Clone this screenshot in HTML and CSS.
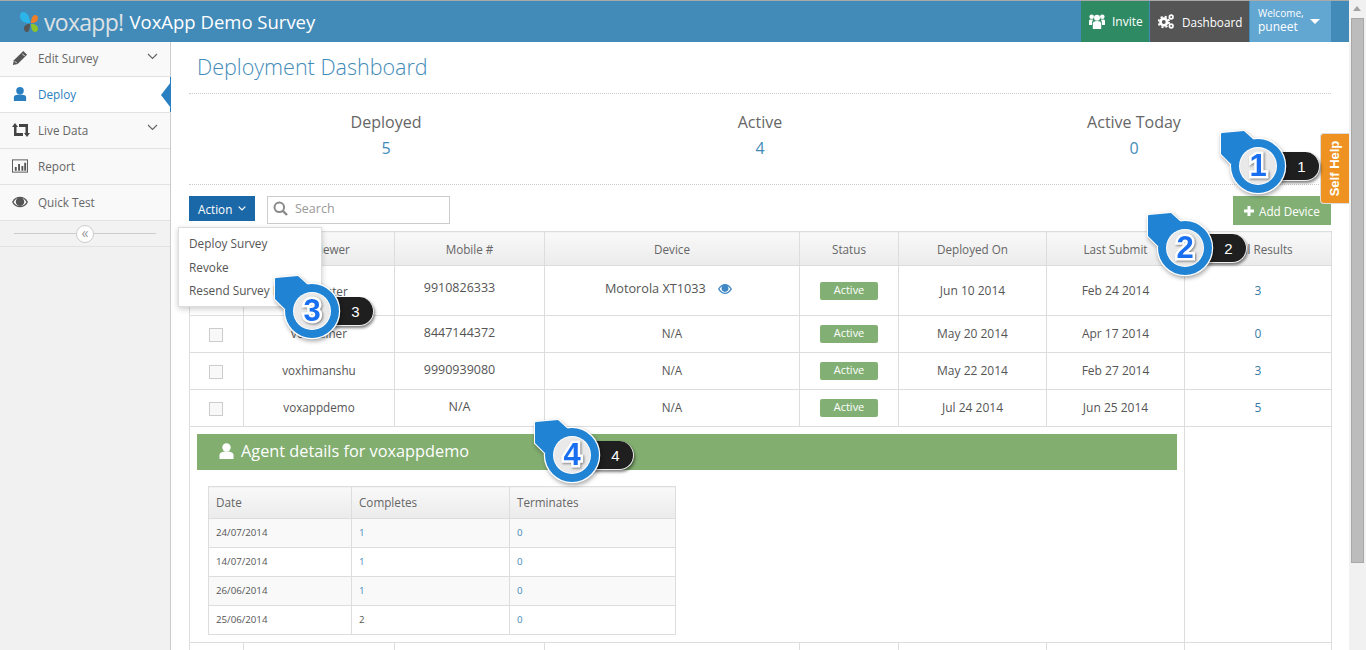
FILE: index.html
```html
<!DOCTYPE html>
<html>
	<head>
		<title>VoxApp Demo Survey</title>
		<link rel="stylesheet" href="styles.css">
	</head>
	<body>
		<svg class="defs" width="0" height="0">
			<symbol id="note_shape" viewBox="0 0 72 72">
				<path d="M3 6Q3 5 4 5L26 3L36 12L13 36L3 26Z" fill="#fff" stroke="#fff" stroke-width="2"/>
				<circle cx="40" cy="38" r="27.500" fill="#fff" stroke="#fff" stroke-width="1.500"/>
				<path d="M3 6Q3 5 4 5L26 3L36 12L13 36L3 26Z" fill="#2183d3"/>
				<circle cx="40" cy="38" r="27" fill="#2183d3"/>
				<circle cx="40" cy="38" r="19" fill="#fff"/>
				<circle cx="40" cy="38" r="18" fill="#e9e9e9"/>
			</symbol>
		</svg>
		<div class="screen">
			<div class="page">
				<div class="topbar">
					<div class="brand">
						<svg class="brand_logo" width="18" height="20" viewBox="0 0 18 20">
							<path d="M10 11C10 5 7 0 3.500 0C1 0 0 2 0 4.500C0 8.500 4.500 11.500 10 11Z" fill="#2bb5e8"/>
							<path d="M11 11C11 7 12.500 3 15 3C17 3 18 4.500 18 6.500C18 9 15 11.300 11 11Z" fill="#ee7f2a"/>
							<path d="M10 12C6.500 11.700 4 13.500 4 16C4 18.500 5.300 20 7 20C9 20 10 16.500 10 12Z" fill="#555"/>
							<path d="M11 12C11 16.500 12.500 20 15 20C17 20 18 18.500 18 16.500C18 13.500 15 11.700 11 12Z" fill="#8cc22a"/>
						</svg>
						<span class="brand_name">voxapp!</span>
						<span class="brand_survey">VoxApp Demo Survey</span>
					</div>
					<div class="topbar_right">
						<div class="top_btn top_invite">
							<svg width="16" height="15" viewBox="0 0 16 15"><circle cx="8" cy="3.800" r="3" fill="#fff"/><path d="M3.800 15V9.500C3.800 7.800 5.500 7 8 7S12.200 7.800 12.200 9.500V15Z" fill="#fff"/><circle cx="2.700" cy="2.800" r="2.300" fill="#fff"/><circle cx="13.300" cy="2.800" r="2.300" fill="#fff"/><path d="M0 11V7C0 5.800 1.200 5.300 4.200 5.800C3.400 6.600 3 7.600 3 11Z" fill="#fff"/><path d="M16 11V7C16 5.800 14.800 5.300 11.800 5.800C12.600 6.600 13 7.600 13 11Z" fill="#fff"/></svg>
							Invite
						</div>
						<div class="top_btn top_dash">
							<svg width="16" height="15" viewBox="0 0 16 15"><circle cx="5.800" cy="8" r="3.300" fill="none" stroke="#fff" stroke-width="2.800"/><circle cx="5.800" cy="8" r="5.300" fill="none" stroke="#fff" stroke-width="1.800" stroke-dasharray="2.200 2"/><circle cx="13.200" cy="3" r="1.800" fill="none" stroke="#fff" stroke-width="1.700"/><circle cx="13.200" cy="12" r="1.800" fill="none" stroke="#fff" stroke-width="1.700"/></svg>
							Dashboard
						</div>
						<div class="top_user">
							<div class="top_user_text"><div class="top_welcome">Welcome,</div><div>puneet</div></div>
							<span class="top_caret"></span>
						</div>
					</div>
				</div>
				<div class="layout">
					<div class="sidebar">
						<div class="side_item side_first">
							<svg class="side_icon" width="16" height="16" viewBox="0 0 17 17"><path d="M12 1L16 5L6 15L1 16L2 11Z" fill="#555"/><path d="M3 12L5 14" stroke="#f9f9f9"/><path d="M11 4L13.500 6.500" stroke="#f9f9f9"/></svg>
							<span>Edit Survey</span>
							<svg class="side_chev" width="11" height="7" viewBox="0 0 11 7"><path d="M1 1L5.500 5.500L10 1" fill="none" stroke="#666" stroke-width="1.200"/></svg>
						</div>
						<div class="side_item side_active">
							<svg class="side_icon" width="16" height="16" viewBox="0 0 17 17"><circle cx="8.500" cy="5" r="4" fill="#2a7fc0"/><path d="M2 16V12C2 10 4 9 8.500 9S15 10 15 12V16Z" fill="#2a7fc0"/></svg>
							<span>Deploy</span>
							<span class="side_arrow"></span>
						</div>
						<div class="side_item">
							<svg class="side_icon side_icon_wide" width="18" height="14" viewBox="0 0 18 14"><path d="M0 4L3 0L6 4H4.500V10H11V13H2V4Z" fill="#444"/><path d="M18 10L15 14L12 10H13.500V4H7V1H16V10Z" fill="#444"/></svg>
							<span>Live Data</span>
							<svg class="side_chev" width="11" height="7" viewBox="0 0 11 7"><path d="M1 1L5.500 5.500L10 1" fill="none" stroke="#666" stroke-width="1.200"/></svg>
						</div>
						<div class="side_item">
							<svg class="side_icon" width="16" height="14" viewBox="0 0 17 14"><rect x=".5" y=".5" width="16" height="13" fill="none" stroke="#555"/><path d="M3 12V8H5V12ZM6.500 12V5H8.500V12ZM10 12V7H12V12ZM13 12V3.500H15V12Z" fill="#555"/></svg>
							<span>Report</span>
						</div>
						<div class="side_item">
							<svg class="side_icon" width="16" height="12" viewBox="0 0 17 12"><path d="M0 6C2 2 5 .5 8.500 .5S15 2 17 6C15 10 12 11.500 8.500 11.500S2 10 0 6Z" fill="#555"/><path d="M1.600 6C3.200 3.400 5 2.200 6 2A4.500 4.500 0 1 0 11 2C12 2.200 13.800 3.400 15.400 6C13.800 8.800 11.500 10.200 8.500 10.200S3.200 8.800 1.600 6Z" fill="#f9f9f9"/><circle cx="8.500" cy="5.600" r="3.400" fill="#555"/></svg>
							<span>Quick Test</span>
						</div>
						<div class="side_collapse">
							<span class="side_collapse_btn">&laquo;</span>
						</div>
					</div>
					<div class="main">
						<div class="title">Deployment Dashboard</div>
						<div class="stats">
							<div class="stat"><div class="stat_label">Deployed</div><div class="stat_num">5</div></div>
							<div class="stat"><div class="stat_label">Active</div><div class="stat_num">4</div></div>
							<div class="stat"><div class="stat_label">Active Today</div><div class="stat_num">0</div></div>
						</div>
						<div class="toolbar">
							<div class="action_btn">Action
								<svg width="8" height="5" viewBox="0 0 8 5"><path d="M.7 .7L4 4L7.300 .7" fill="none" stroke="#fff" stroke-width="1.200"/></svg>
							</div>
							<div class="search">
								<svg width="15" height="15" viewBox="0 0 15 15"><circle cx="6.300" cy="6.300" r="4.800" fill="none" stroke="#8a8a8a" stroke-width="2"/><path d="M10 10L14 14" stroke="#8a8a8a" stroke-width="2.400"/></svg>
								<span>Search</span>
							</div>
							<div class="add_btn">
								<svg width="10" height="10" viewBox="0 0 10 10"><path d="M3.500 0H6.500V3.500H10V6.500H6.500V10H3.500V6.500H0V3.500H3.500Z" fill="#fff"/></svg>
								Add Device
							</div>
						</div>
						<table class="devices">
							<colgroup>
								<col class="c_check"><col class="c_name"><col class="c_mobile"><col class="c_device"><col class="c_status"><col class="c_deployed"><col class="c_last"><col class="c_total">
							</colgroup>
							<thead>
								<tr><th></th><th>Interviewer</th><th>Mobile #</th><th>Device</th><th>Status</th><th>Deployed On</th><th>Last Submit</th><th>Total Results</th></tr>
							</thead>
							<tbody>
								<tr class="row_first">
									<td><span class="check"></span></td><td>voxmaster</td><td class="up">9910826333</td>
									<td class="up_dev">Motorola XT1033
										<svg class="eye" width="14" height="10" viewBox="0 0 14 10"><path d="M0 5C2 1.500 4.500 0 7 0S12 1.500 14 5C12 8.500 9.500 10 7 10S2 8.500 0 5Z" fill="#3f87c5"/><path d="M1.500 5C2.700 3.200 3.800 2.200 4.800 1.700A3.500 3.500 0 1 0 9.200 1.700C10.200 2.200 11.300 3.200 12.500 5C11 7.300 9 8.800 7 8.800S3 7.300 1.500 5Z" fill="#fff"/><circle cx="7" cy="4.500" r="2.800" fill="#3f87c5"/></svg>
									</td>
									<td><span class="badge">Active</span></td><td class="date">Jun 10 2014</td><td class="date">Feb 24 2014</td><td class="total">3</td>
								</tr>
								<tr>
									<td><span class="check"></span></td><td>voxtrainer</td><td class="up">8447144372</td><td>N/A</td>
									<td><span class="badge">Active</span></td><td class="date">May 20 2014</td><td class="date">Apr 17 2014</td><td class="total">0</td>
								</tr>
								<tr>
									<td><span class="check"></span></td><td>voxhimanshu</td><td class="up">9990939080</td><td>N/A</td>
									<td><span class="badge">Active</span></td><td class="date">May 22 2014</td><td class="date">Feb 27 2014</td><td class="total">3</td>
								</tr>
								<tr>
									<td><span class="check"></span></td><td>voxappdemo</td><td class="up">N/A</td><td>N/A</td>
									<td><span class="badge">Active</span></td><td class="date">Jul 24 2014</td><td class="date">Jun 25 2014</td><td class="total">5</td>
								</tr>
								<tr class="row_detail">
									<td colspan="7">
										<div class="agent_head">
											<svg width="15" height="16" viewBox="0 0 15 16"><circle cx="7.500" cy="4.500" r="4.200" fill="#fff"/><path d="M.5 16V12C.5 9.800 3 8.500 7.500 8.500S14.500 9.800 14.500 12V16Z" fill="#fff"/></svg>
											Agent details for voxappdemo
										</div>
										<table class="agent">
											<colgroup><col class="a_date"><col class="a_comp"><col class="a_term"></colgroup>
											<thead><tr><th>Date</th><th>Completes</th><th>Terminates</th></tr></thead>
											<tbody>
												<tr><td>24/07/2014</td><td class="link">1</td><td class="link">0</td></tr>
												<tr><td>14/07/2014</td><td class="link">1</td><td class="link">0</td></tr>
												<tr><td>26/06/2014</td><td class="link">1</td><td class="link">0</td></tr>
												<tr><td>25/06/2014</td><td>2</td><td class="link">0</td></tr>
											</tbody>
										</table>
									</td>
									<td></td>
								</tr>
								<tr>
									<td></td><td></td><td></td><td></td><td></td><td></td><td></td><td></td>
								</tr>
							</tbody>
						</table>

						<div class="action_menu">
							<div>Deploy Survey</div>
							<div>Revoke</div>
							<div>Resend Survey Link</div>
						</div>
					</div>
				</div>

				<div class="self_help"><span>Self Help</span></div>

				<div class="note note_1">
					<span class="note_pill">1</span>
					<svg class="note_mark" width="72" height="72"><use href="#note_shape"/></svg>
					<span class="note_num">1</span>
				</div>
				<div class="note note_2">
					<span class="note_pill">2</span>
					<svg class="note_mark" width="72" height="72"><use href="#note_shape"/></svg>
					<span class="note_num">2</span>
				</div>
				<div class="note note_3">
					<span class="note_pill">3</span>
					<svg class="note_mark" width="72" height="72"><use href="#note_shape"/></svg>
					<span class="note_num">3</span>
				</div>
				<div class="note note_4">
					<span class="note_pill">4</span>
					<svg class="note_mark" width="72" height="72"><use href="#note_shape"/></svg>
					<span class="note_num">4</span>
				</div>
			</div>
			<div class="scrollbar">
				<div class="scroll_up"></div>
				<div class="scroll_thumb"></div>
			</div>
		</div>
	</body>
</html>
```
FILE: styles.css
```css
html	{
	height: 100%;
	overflow: hidden;
}
body	{
	height: 100%;
	margin: 0;
	font-family: 'Open Sans', sans-serif;
	font-size: 11.7px;
	color: #555;
	background: #fff;
}
svg	{
	flex: none;
}
.defs	{
	position: absolute;
}
.screen	{
	display: flex;
	height: 650px;
	overflow: hidden;
}
.page	{
	position: relative;
	flex: 1;
	min-width: 0;
}

/* top bar */
.topbar	{
	display: flex;
	justify-content: space-between;
	height: 41px;
	border-top: 1px solid #a9a9a9;
	background: #428bb9;
	color: #fff;
}
.brand	{
	display: flex;
	align-items: center;
	padding-left: 20px;
}
.brand_logo	{
	margin-right: 6px;
}
.brand_name	{
	font-size: 23px;
	letter-spacing: -0.7px;
	color: #dde1e4;
	margin-right: 6px;
}
.brand_survey	{
	font-size: 18.500px;
}
.topbar_right	{
	display: flex;
	margin-right: 18px;
}
.top_btn	{
	display: flex;
	align-items: center;
	box-sizing: border-box;
	padding-left: 8px;
	margin-right: 1px;
	font-size: 12px;
}
.top_invite	{
	gap: 7px;
	width: 68px;
	background: #2e8a63;
}
.top_dash	{
	gap: 8px;
	width: 99px;
	background: #555;
	font-size: 11.700px;
}
.top_user	{
	display: flex;
	align-items: center;
	width: 81px;
	box-sizing: border-box;
	padding: 0 0 3px 8px;
	background: #62a6d2;
	font-size: 12px;
	line-height: 13px;
}
.top_welcome	{
	font-size: 10px;
}
.top_caret	{
	margin: 3px 0 0 6px;
	border: 5.500px solid transparent;
	border-top: 5.500px solid #fff;
	border-bottom: 0;
}

/* sidebar */
.layout	{
	display: flex;
	height: 608px;
}
.sidebar	{
	flex: none;
	width: 170px;
	border-right: 1px solid #ccc;
	background: #f1f1f1;
	color: #666;
}
.side_item	{
	position: relative;
	display: flex;
	align-items: center;
	height: 33px;
	padding: 0 0 2px 12px;
	border-bottom: 1px solid #e2e2e2;
	background: #f9f9f9;
}
.side_first	{
	height: 32px;
}
.side_icon	{
	margin-right: 10px;
}
.side_icon_wide	{
	margin-right: 8px;
}
.side_chev	{
	margin-left: auto;
	margin-right: 12px;
	margin-bottom: 4px;
}
.side_active	{
	background: #fff;
	color: #2a7fc0;
	margin-right: -1px;
	box-shadow: inset -1px 0 0 #2a7fc0;
}
.side_arrow	{
	position: absolute;
	right: 0;
	top: 4.500px;
	border: 13px solid transparent;
	border-left: 0;
	border-right: 10px solid #2a7fc0;
}
.side_collapse	{
	position: relative;
	display: flex;
	justify-content: center;
	align-items: center;
	height: 25px;
	border-bottom: 1px solid #e2e2e2;
	background: #f2f2f2;
}
.side_collapse:before	{
	content: "";
	position: absolute;
	left: 14px;
	right: 14px;
	top: 12px;
	border-top: 1px solid #ccc;
}
.side_collapse_btn	{
	position: relative;
	width: 16px;
	height: 16px;
	border: 1px solid #ccc;
	border-radius: 50%;
	background: #fff;
	color: #999;
	font-size: 14px;
	line-height: 13px;
	text-align: center;
}

/* main */
.main	{
	position: relative;
	flex: 1;
	padding: 0 18px;
	min-width: 0;
}
.title	{
	height: 51px;
	padding-left: 8px;
	border-bottom: 1px dotted #ccc;
	font-size: 21.500px;
	font-weight: 300;
	line-height: 49px;
	color: #428bb9;
}
.stats	{
	display: flex;
	height: 90px;
	padding: 0 10px;
	border-bottom: 1px dotted #ccc;
	text-align: center;
}
.stat	{
	flex: 1;
	padding-top: 17px;
}
.stat_label	{
	font-size: 16px;
	line-height: 22px;
	color: #666;
}
.stat_num	{
	margin-top: 4px;
	font-size: 16px;
	line-height: 22px;
	color: #428bb9;
}
.toolbar	{
	display: flex;
	align-items: flex-start;
	height: 47px;
	padding-top: 11px;
	box-sizing: border-box;
}
.action_btn	{
	display: flex;
	align-items: center;
	gap: 6px;
	height: 25px;
	padding: 0 9px;
	background: #1b68a8;
	color: #fff;
	box-sizing: border-box;
	width: 66px;
}
.search	{
	display: flex;
	align-items: center;
	gap: 7px;
	width: 183px;
	height: 28px;
	box-sizing: border-box;
	margin-left: 12px;
	padding: 0 0 3px 5px;
	border: 1px solid #ccc;
	color: #999;
	font-size: 12.500px;
}
.add_btn	{
	display: flex;
	align-items: center;
	gap: 5px;
	margin-left: auto;
	width: 98px;
	height: 29px;
	box-sizing: border-box;
	padding-left: 11px;
	background: #82b074;
	color: #fff;
}

/* tables */
.devices	{
	width: 1142px;
	margin-top: -1px;
	border-collapse: collapse;
	table-layout: fixed;
	text-align: center;
}
.c_check	{ width: 54px; }
.c_name		{ width: 151px; }
.c_mobile	{ width: 150px; }
.c_device	{ width: 255px; }
.c_status	{ width: 99px; }
.c_deployed	{ width: 148px; }
.c_last		{ width: 138px; }
.c_total	{ width: 147px; }
.devices th, .devices td	{
	border: 1px solid #ddd;
	padding: 0;
	box-sizing: border-box;
}
.devices > thead th	{
	height: 34px;
	font-weight: 400;
	color: #666;
	background: linear-gradient(to bottom, #f9f9f9, #ebebeb);
}
.devices > tbody > tr > td	{
	height: 37px;
	padding-bottom: 2px;
}
.devices > tbody > tr.row_first > td	{
	height: 50px;
	padding-bottom: 0;
}
.devices > tbody > tr > td.up	{
	padding: 0 20px 4px 0;
	font-size: 12.500px;
}
.devices > tbody > tr.row_first > td.up	{
	padding-bottom: 6px;
}
.devices > tbody > tr.row_first > td.up_dev	{
	padding: 0 7px 5px 0;
	font-size: 12.700px;
}
.date	{
	font-size: 12px;
}
.total	{
	font-size: 12px;
	color: #3b7ba6;
}
.link	{
	color: #428bb9;
}
.check	{
	display: inline-block;
	width: 12px;
	height: 12px;
	margin: 4px 2px 0 0;
	vertical-align: middle;
	border: 1px solid #ccc;
	background: #f8f8f8;
}
.eye	{
	margin-left: 9px;
	vertical-align: -1px;
}
.badge	{
	display: inline-block;
	width: 58px;
	height: 18px;
	margin-top: 2px;
	border-radius: 2px;
	background: #82b074;
	color: #fff;
	font-size: 11px;
	line-height: 16px;
}
.row_first .badge	{
	margin-top: 0;
}
.devices > tbody > tr.row_detail > td	{
	height: 216px;
	padding: 0;
	vertical-align: top;
	text-align: left;
}
.agent_head	{
	display: flex;
	align-items: center;
	gap: 7px;
	height: 36px;
	margin: 7px 7px 0 7px;
	padding-left: 22px;
	padding-bottom: 2px;
	box-sizing: border-box;
	background: #82ae70;
	color: #fff;
	font-size: 16.300px;
}
.agent	{
	width: 467px;
	margin: 16px 0 0 18px;
	border-collapse: collapse;
	table-layout: fixed;
	font-size: 9.700px;
}
.a_date	{ width: 143px; }
.a_comp	{ width: 158px; }
.a_term	{ width: 166px; }
.devices .agent th, .devices .agent td	{
	border: 1px solid #ddd;
	padding: 0 0 2px 7px;
	box-sizing: border-box;
}
.agent th	{
	height: 32px;
	font-size: 11.700px;
	font-weight: 400;
	color: #666;
	background: linear-gradient(to bottom, #f9f9f9, #ebebeb);
}
.agent td	{
	height: 29px;
}
.agent tbody tr:nth-child(odd) td	{
	background: #f9f9f9;
}

/* dropdown */
.action_menu	{
	position: absolute;
	left: 7px;
	top: 185px;
	width: 144px;
	height: 80px;
	box-sizing: border-box;
	padding: 4px 10px;
	border: 1px solid #ddd;
	background: #fff;
	box-shadow: 0 2px 6px rgba(0, 0, 0, 0.2);
	font-size: 11.800px;
	line-height: 23.500px;
	white-space: nowrap;
	overflow: hidden;
}

/* tab on the edge */
.self_help	{
	position: absolute;
	left: 1320px;
	top: 133px;
	display: flex;
	align-items: center;
	justify-content: center;
	width: 29px;
	height: 71px;
	box-sizing: border-box;
	border-radius: 4px 0 0 4px;
	border: 1px solid #ddd;
	border-right: 0;
	background: #ee9322;
	color: #fff;
	font-family: 'Liberation Sans', sans-serif;
	font-size: 13px;
	font-weight: 700;
}
.self_help span	{
	transform: rotate(-90deg);
	white-space: nowrap;
}

/* callouts */
.note	{
	position: absolute;
	width: 104px;
	height: 72px;
}
.note_1	{ left: 1218px; top: 128px; }
.note_2	{ left: 1145px; top: 210px; }
.note_3	{ left: 272px; top: 273px; }
.note_4	{ left: 532px; top: 417px; }
.note_mark	{
	position: absolute;
	left: 0;
	top: 0;
	filter: drop-shadow(1px 2px 2px rgba(0, 0, 0, 0.35));
}
.note_pill	{
	position: absolute;
	left: 52px;
	top: 24px;
	width: 50px;
	height: 29px;
	box-sizing: border-box;
	padding-left: 14px;
	border-radius: 0 15px 15px 0;
	background: #1f1f1f;
	border-right: 1px solid #eee;
	border-bottom: 1px solid #eee;
	box-shadow: 1px 2px 3px rgba(0, 0, 0, 0.5);
	color: #fff;
	font-family: 'Liberation Sans', sans-serif;
	font-size: 15px;
	line-height: 29px;
	text-align: center;
}
.note_num	{
	position: absolute;
	left: 20px;
	top: 18px;
	width: 40px;
	height: 40px;
	color: #1a6ff0;
	font-family: 'Liberation Sans', sans-serif;
	font-size: 31px;
	font-weight: 700;
	line-height: 40px;
	text-align: center;
	-webkit-text-stroke: 5px #fff;
	paint-order: stroke fill;
	filter: drop-shadow(1px 1px 1px rgba(0, 0, 0, 0.45));
}

/* scrollbar */
.scrollbar	{
	flex: none;
	width: 17px;
	background: #f1f1f1;
}
.scroll_up	{
	height: 17px;
	position: relative;
}
.scroll_up:before	{
	content: "";
	position: absolute;
	left: 4px;
	top: 6px;
	border: 4px solid transparent;
	border-top: 0;
	border-bottom: 5px solid #a3a3a3;
}
.scroll_thumb	{
	height: 545px;
	margin: 1px 2px 0 2px;
	background: #bcbcbc;
	border: 1px solid #a8a8a8;
	box-sizing: border-box;
}
```
